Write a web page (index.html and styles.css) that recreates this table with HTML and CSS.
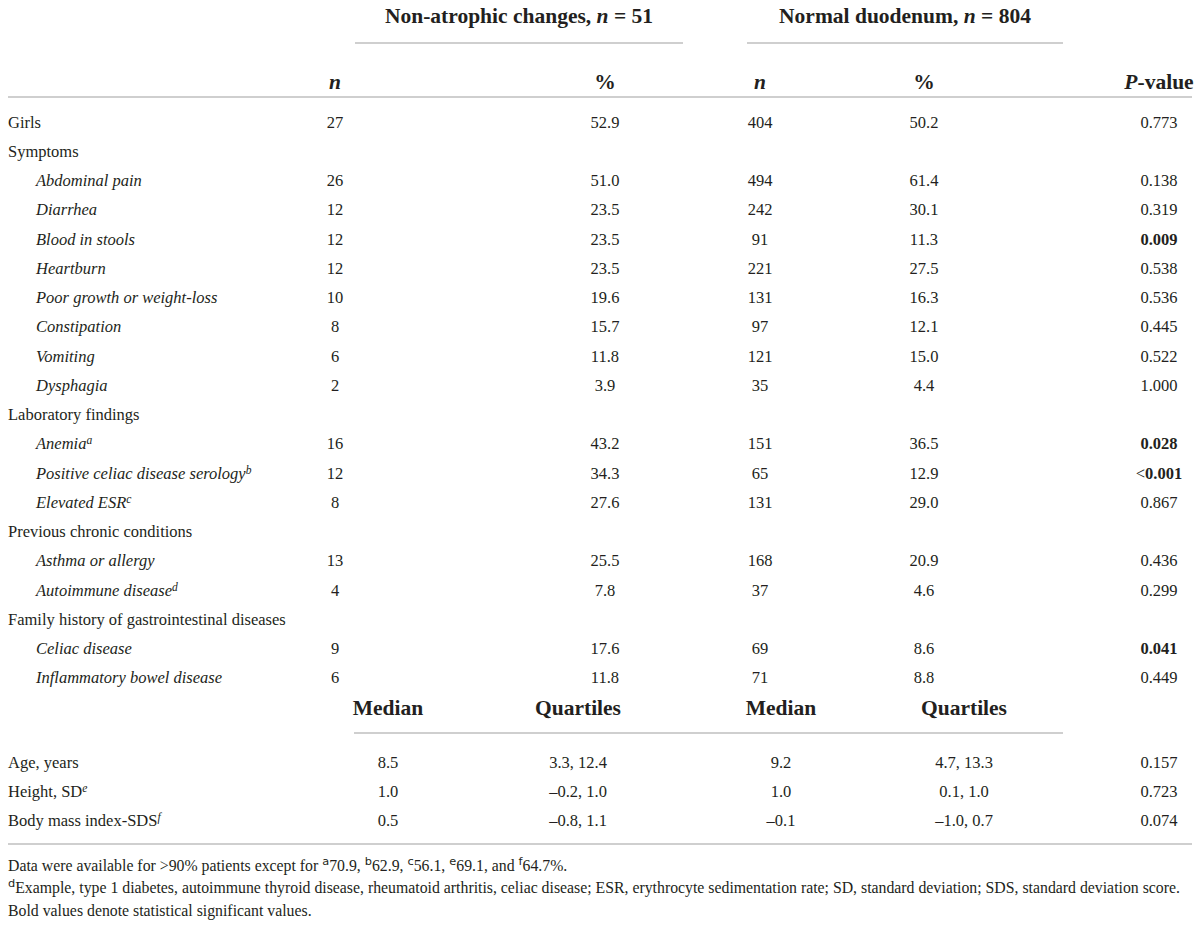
FILE: index.html
```html
<!DOCTYPE html>
<html lang="en">
<head>
<meta charset="utf-8">
<title>Table</title>
<link rel="stylesheet" href="styles.css">
</head>
<body>
<div class="page">
  <div class="hdr1">
    <div class="grp g1">Non-atrophic changes, <i>n</i> = 51</div>
    <div class="grp g2">Normal duodenum, <i>n</i> = 804</div>
  </div>
  <div class="row hdr2">
    <div class="c n1"><i>n</i></div>
    <div class="c p1">%</div>
    <div class="c n2"><i>n</i></div>
    <div class="c p2">%</div>
    <div class="c pv"><i>P</i>-value</div>
  </div>

  <div class="body">
    <div class="row"><div class="lbl">Girls</div><div class="c n1">27</div><div class="c p1">52.9</div><div class="c n2">404</div><div class="c p2">50.2</div><div class="c pv">0.773</div></div>
    <div class="row"><div class="lbl">Symptoms</div></div>
    <div class="row"><div class="lbl sub">Abdominal pain</div><div class="c n1">26</div><div class="c p1">51.0</div><div class="c n2">494</div><div class="c p2">61.4</div><div class="c pv">0.138</div></div>
    <div class="row"><div class="lbl sub">Diarrhea</div><div class="c n1">12</div><div class="c p1">23.5</div><div class="c n2">242</div><div class="c p2">30.1</div><div class="c pv">0.319</div></div>
    <div class="row"><div class="lbl sub">Blood in stools</div><div class="c n1">12</div><div class="c p1">23.5</div><div class="c n2">91</div><div class="c p2">11.3</div><div class="c pv"><b>0.009</b></div></div>
    <div class="row"><div class="lbl sub">Heartburn</div><div class="c n1">12</div><div class="c p1">23.5</div><div class="c n2">221</div><div class="c p2">27.5</div><div class="c pv">0.538</div></div>
    <div class="row"><div class="lbl sub">Poor growth or weight-loss</div><div class="c n1">10</div><div class="c p1">19.6</div><div class="c n2">131</div><div class="c p2">16.3</div><div class="c pv">0.536</div></div>
    <div class="row"><div class="lbl sub">Constipation</div><div class="c n1">8</div><div class="c p1">15.7</div><div class="c n2">97</div><div class="c p2">12.1</div><div class="c pv">0.445</div></div>
    <div class="row"><div class="lbl sub">Vomiting</div><div class="c n1">6</div><div class="c p1">11.8</div><div class="c n2">121</div><div class="c p2">15.0</div><div class="c pv">0.522</div></div>
    <div class="row"><div class="lbl sub">Dysphagia</div><div class="c n1">2</div><div class="c p1">3.9</div><div class="c n2">35</div><div class="c p2">4.4</div><div class="c pv">1.000</div></div>
    <div class="row"><div class="lbl">Laboratory findings</div></div>
    <div class="row"><div class="lbl sub">Anemia<sup>a</sup></div><div class="c n1">16</div><div class="c p1">43.2</div><div class="c n2">151</div><div class="c p2">36.5</div><div class="c pv"><b>0.028</b></div></div>
    <div class="row"><div class="lbl sub">Positive celiac disease serology<sup>b</sup></div><div class="c n1">12</div><div class="c p1">34.3</div><div class="c n2">65</div><div class="c p2">12.9</div><div class="c pv">&lt;<b>0.001</b></div></div>
    <div class="row"><div class="lbl sub">Elevated ESR<sup>c</sup></div><div class="c n1">8</div><div class="c p1">27.6</div><div class="c n2">131</div><div class="c p2">29.0</div><div class="c pv">0.867</div></div>
    <div class="row"><div class="lbl">Previous chronic conditions</div></div>
    <div class="row"><div class="lbl sub">Asthma or allergy</div><div class="c n1">13</div><div class="c p1">25.5</div><div class="c n2">168</div><div class="c p2">20.9</div><div class="c pv">0.436</div></div>
    <div class="row"><div class="lbl sub">Autoimmune disease<sup>d</sup></div><div class="c n1">4</div><div class="c p1">7.8</div><div class="c n2">37</div><div class="c p2">4.6</div><div class="c pv">0.299</div></div>
    <div class="row"><div class="lbl">Family history of gastrointestinal diseases</div></div>
    <div class="row"><div class="lbl sub">Celiac disease</div><div class="c n1">9</div><div class="c p1">17.6</div><div class="c n2">69</div><div class="c p2">8.6</div><div class="c pv"><b>0.041</b></div></div>
    <div class="row"><div class="lbl sub">Inflammatory bowel disease</div><div class="c n1">6</div><div class="c p1">11.8</div><div class="c n2">71</div><div class="c p2">8.8</div><div class="c pv">0.449</div></div>
  </div>

  <div class="mrow mhead">
    <div class="c m1">Median</div>
    <div class="c q1">Quartiles</div>
    <div class="c m2">Median</div>
    <div class="c q2">Quartiles</div>
  </div>
  <div class="rule-med"></div>

  <div class="mbody">
    <div class="mrow"><div class="lbl">Age, years</div><div class="c m1">8.5</div><div class="c q1">3.3, 12.4</div><div class="c m2">9.2</div><div class="c q2">4.7, 13.3</div><div class="c pv">0.157</div></div>
    <div class="mrow"><div class="lbl">Height, SD<sup>e</sup></div><div class="c m1">1.0</div><div class="c q1">–0.2, 1.0</div><div class="c m2">1.0</div><div class="c q2">0.1, 1.0</div><div class="c pv">0.723</div></div>
    <div class="mrow"><div class="lbl">Body mass index-SDS<sup>f</sup></div><div class="c m1">0.5</div><div class="c q1">–0.8, 1.1</div><div class="c m2">–0.1</div><div class="c q2">–1.0, 0.7</div><div class="c pv">0.074</div></div>
  </div>

  <div class="notes">
    <p>Data were available for &gt;90% patients except for <sup class="fs">a</sup>70.9, <sup class="fs">b</sup>62.9, <sup class="fs">c</sup>56.1, <sup class="fs">e</sup>69.1, and <sup class="fs">f</sup>64.7%.</p>
    <p><sup class="fs">d</sup>Example, type 1 diabetes, autoimmune thyroid disease, rheumatoid arthritis, celiac disease; ESR, erythrocyte sedimentation rate; SD, standard deviation; SDS, standard deviation score.</p>
    <p>Bold values denote statistical significant values.</p>
  </div>
</div>
</body>
</html>
```

FILE: styles.css
```css
html, body {
  margin: 0;
  padding: 0;
  background: #ffffff;
}

body {
  font-family: "Liberation Serif", "Times New Roman", serif;
  color: #231f20;
  font-size: 16.5px;
}

.page {
  width: 1184px;
  padding: 0 8px;
}

/* top group header */
.hdr1 {
  display: grid;
  grid-template-columns: 347px 328px 64px 316px 129px;
}
.grp {
  font-weight: bold;
  font-size: 21.5px;
  line-height: 28px;
  padding: 2px 0 12px;
  border-bottom: 2px solid #cfcfcf;
  text-align: center;
  white-space: nowrap;
}
.g1 { grid-column: 2; }
.g2 { grid-column: 4; }

/* data grid */
.row {
  display: grid;
  grid-template-columns: 277px 100px 170px 100px 55px 100px 64px 100px 152px 66px;
  height: 29.25px;
  align-items: center;
}

.c {
  display: flex;
  justify-content: center;
  white-space: nowrap;
}
.lbl {
  grid-column: 1;
  white-space: nowrap;
}
.lbl.sub {
  font-style: italic;
  padding-left: 28px;
}
.n1 { grid-column: 2; }
.p1 { grid-column: 4; }
.n2 { grid-column: 6; }
.p2 { grid-column: 8; }
.pv { grid-column: 10; }

.hdr2 {
  height: auto;
  padding-top: 24px;
  line-height: 28px;
  font-size: 21.5px;
  font-weight: bold;
  border-bottom: 2px solid #cfcfcf;
}

.body {
  padding-top: 10px;
}

sup {
  font-size: 70%;
  line-height: 0;
  vertical-align: 0.45em;
}
.lbl sup {
  font-style: italic;
}

/* median section */
.mrow {
  display: grid;
  grid-template-columns: 330px 100px 90px 100px 103px 100px 83px 100px 112px 66px;
  height: 29.25px;
  align-items: center;
}
.m1 { grid-column: 2; }
.q1 { grid-column: 4; }
.m2 { grid-column: 6; }
.q2 { grid-column: 8; }
.mrow .pv { grid-column: 10; }

.mhead {
  height: 30px;
  font-size: 21.5px;
  font-weight: bold;
}

.rule-med {
  margin: 9px 0 0 346px;
  width: 709px;
  height: 2px;
  background: #cfcfcf;
}

.mbody {
  padding: 14px 0 7px;
  border-bottom: 2px solid #cfcfcf;
}

.notes {
  padding-top: 10px;
  font-size: 15.8px;
  line-height: 22.5px;
}
.notes p {
  margin: 0;
  white-space: nowrap;
}
.fs {
  font-size: 72%;
  font-family: "DejaVu Sans", "Liberation Sans", sans-serif;
  vertical-align: 0.5em;
}
```
